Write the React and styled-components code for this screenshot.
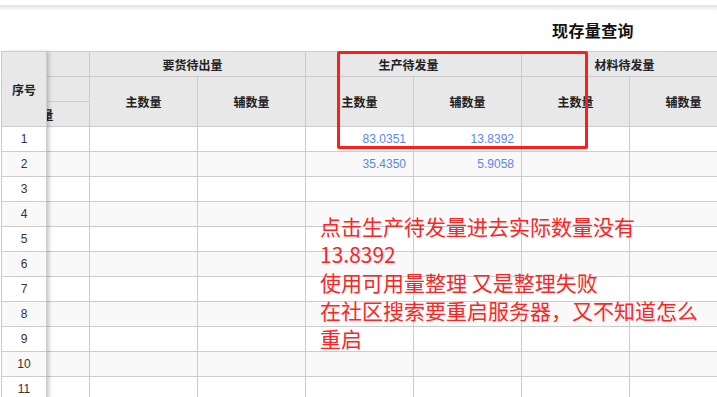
import React from "react";
import styled, { createGlobalStyle } from "styled-components";

const GlobalStyle = createGlobalStyle`
  html, body {
    margin: 0;
    padding: 0;
    background: #fff;
    overflow: hidden;
  }
  body {
    font-family: "Liberation Sans", "Noto Sans CJK SC", sans-serif;
    color: #333;
  }
`;

const Page = styled.div`
  position: relative;
  width: 717px;
  height: 397px;
  overflow: hidden;
`;

const TopShadow = styled.div`
  height: 11px;
  background: linear-gradient(#fff 0, #fff 5px, #e2e2e2 5px, #ececec 7px, #fff 11px);
`;

const TitleBar = styled.div`
  height: 37px;
  padding: 0 0 3px 552px;
  display: flex;
  align-items: center;
`;

const Title = styled.h1`
  margin: 0;
  font-family: "Noto Sans CJK SC", sans-serif;
  font-size: 16px;
  font-weight: 700;
  color: #111;
  letter-spacing: 0.4px;
`;

const GridArea = styled.div`
  display: flex;
  padding-left: 1px;
  align-items: flex-start;
`;

const Frozen = styled.div`
  position: relative;
  z-index: 1;
  display: grid;
  grid-template-columns: 44px;
  grid-auto-rows: 24px;
  gap: 1px;
  padding: 1px;
  background: #cccccc;
  box-shadow: 3px 0 4px -1px rgba(0, 0, 0, 0.22);
`;

const Viewport = styled.div`
  flex: 1;
  overflow: hidden;
`;

const Scrolled = styled.div`
  margin-left: -65px;
  width: max-content;
  display: grid;
  grid-template-columns: repeat(7, 107px);
  grid-auto-rows: 24px;
  gap: 1px;
  padding: 1px 1px 0 0;
  background: #cccccc;
`;

const HeadCell = styled.div`
  grid-column: ${(p) => p.$col || "auto"};
  grid-row: ${(p) => p.$row || "auto"};
  background: #e8e8e8;
  display: flex;
  align-items: center;
  justify-content: center;
  padding-right: ${(p) => (p.$group ? "10px" : "0")};
  font-family: "Noto Sans CJK SC", sans-serif;
  font-size: 12px;
  font-weight: 700;
  color: #222;
  white-space: nowrap;
  overflow: hidden;
`;

const Cell = styled.div`
  background: ${(p) => (p.$even ? "#f9f9f9" : "#ffffff")};
  display: flex;
  align-items: center;
  justify-content: ${(p) => (p.$center ? "center" : "flex-end")};
  padding-right: ${(p) => (p.$center ? "0" : "7px")};
  font-family: "Liberation Sans", Arial, sans-serif;
  font-size: 12px;
  color: ${(p) => (p.$num ? "#5c86ee" : "#333")};
`;

const RedBox = styled.div`
  position: absolute;
  left: 337px;
  top: 51px;
  width: 245px;
  height: 92px;
  border: 3px solid #ff1c1c;
  border-radius: 2px;
  pointer-events: none;
`;

const Note = styled.div`
  position: absolute;
  left: 320px;
  top: 212px;
  width: 392px;
  font-family: "Noto Sans CJK SC", sans-serif;
  font-size: 21px;
  line-height: 28px;
  color: #ff2424;
  white-space: pre-line;
`;

const rows = [
  { n: 1, a: "83.0351", b: "13.8392" },
  { n: 2, a: "35.4350", b: "5.9058" },
  ...Array.from({ length: 10 }, (_, i) => ({ n: i + 3 })),
];

export default function App() {
  return (
    <Page>
      <GlobalStyle />
      <TopShadow />
      <TitleBar>
        <Title>现存量查询</Title>
      </TitleBar>
      <GridArea>
        <Frozen>
          <HeadCell $row="span 3">序号</HeadCell>
          {rows.map((r) => (
            <Cell key={r.n} $center $even={r.n % 2 === 0}>
              {r.n}
            </Cell>
          ))}
        </Frozen>
        <Viewport>
          <Scrolled>
            <HeadCell $col="1" $row="1" />
            <HeadCell $col="2 / span 2" $row="1" $group>
              要货待出量
            </HeadCell>
            <HeadCell $col="4 / span 2" $row="1" $group>
              生产待发量
            </HeadCell>
            <HeadCell $col="6 / span 2" $row="1" $group>
              材料待发量
            </HeadCell>
            <HeadCell $col="1" $row="2" />
            <HeadCell $col="1" $row="3">
              辅数量
            </HeadCell>
            {["主数量", "辅数量", "主数量", "辅数量", "主数量", "辅数量"].map((t, i) => (
              <HeadCell key={i} $col={`${i + 2}`} $row="2 / span 2">
                {t}
              </HeadCell>
            ))}
            {rows.map((r) =>
              [null, null, null, r.a, r.b, null, null].map((v, i) => (
                <Cell key={`${r.n}-${i}`} $even={r.n % 2 === 0} $num>
                  {v}
                </Cell>
              ))
            )}
          </Scrolled>
        </Viewport>
      </GridArea>
      <RedBox />
      <Note>
        {"点击生产待发量进去实际数量没有\n13.8392\n使用可用量整理 又是整理失败\n在社区搜索要重启服务器，又不知道怎么重启"}
      </Note>
    </Page>
  );
}
